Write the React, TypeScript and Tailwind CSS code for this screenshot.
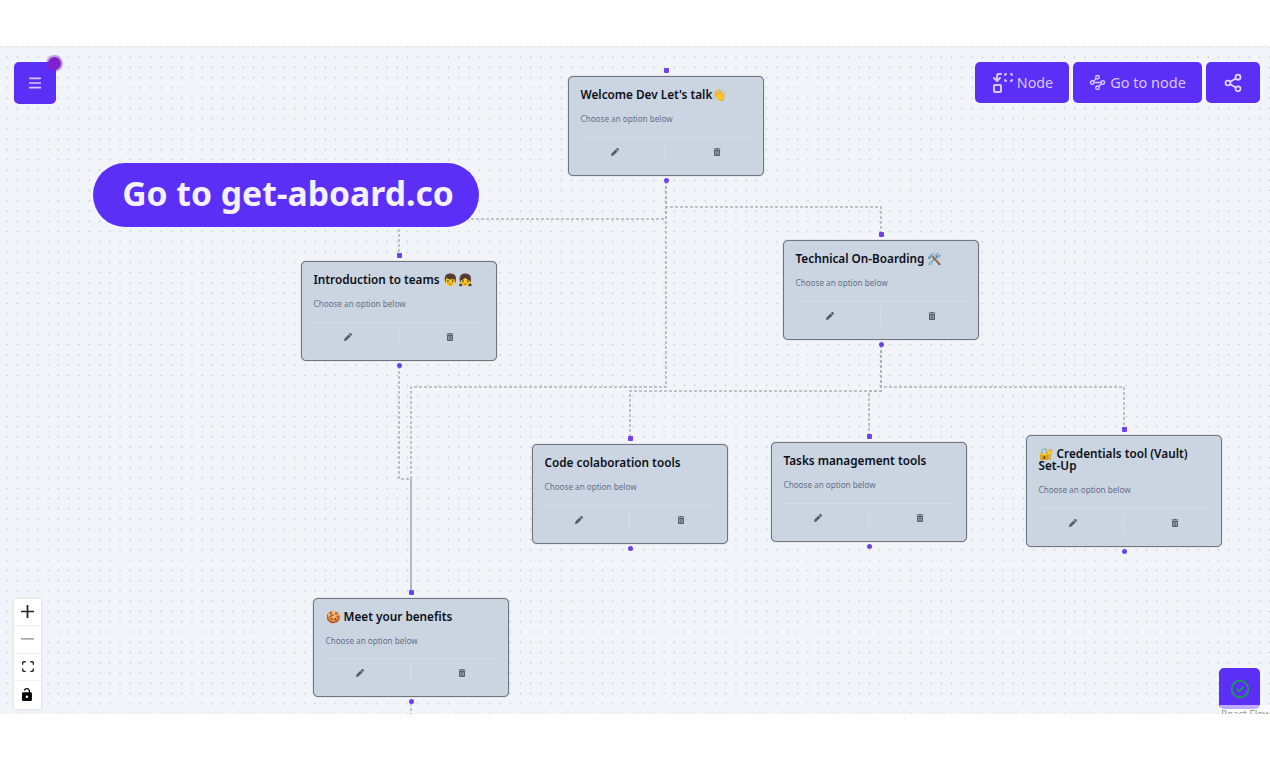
import React from "react";
import { Menu, Replace, Share2, Waypoints } from "lucide-react";
import { FaPen, FaTrashCan } from "react-icons/fa6";

interface FlowNode {
    id: string;
    title: string;
    position: string;
}

const nodes: FlowNode[] = [
    { id: "welcome", title: "Welcome Dev Let's talk👋", position: "left-[567.5px] top-[30px] h-[100px]" },
    { id: "intro", title: "Introduction to teams 👦👧", position: "left-[300.5px] top-[215px] h-[100px]" },
    { id: "tech", title: "Technical On-Boarding 🛠️", position: "left-[782.5px] top-[194px] h-[100px]" },
    { id: "code", title: "Code colaboration tools", position: "left-[531.5px] top-[398px] h-[100px]" },
    { id: "tasks", title: "Tasks management tools", position: "left-[770.5px] top-[396px] h-[100px]" },
    { id: "vault", title: "🔐 Credentials tool (Vault) Set-Up", position: "left-[1025.5px] top-[389px] h-[112px]" },
    { id: "benefits", title: "🍪 Meet your benefits", position: "left-[312.5px] top-[551.5px] h-[99.5px]" },
];

const edges: string[] = [
    "M666 181V219H399V255",
    "M666 181V207H881V234",
    "M666 181V387H411V591",
    "M399 366V479H411V591",
    "M881 345V391H630V437",
    "M881 345V391H869V436",
    "M881 345V387H1124V429",
    "M411 703V714",
];

const NodeCard = ({ title, position }: FlowNode): JSX.Element => (
    <div className={`absolute w-[196.5px] ${position}`}>
        <div className="absolute -top-[8px] left-[96px] size-[5px] rounded-[1px] bg-[#7040f0]" />
        <div className="flex h-full flex-col rounded-[5px] border border-[#6f7680] bg-[#cbd5e1] px-3 pt-[11px] shadow-[0_0_1px_#6f7680]">
            <h2 className="text-[11.75px] leading-[12px] font-semibold text-[#0b0f19]">{title}</h2>
            <p className="mt-[13px] text-[8.15px] leading-[12px] text-[#64708a]">Choose an option below</p>
            <div className="mt-auto mb-[13px] flex items-center border-t border-[#d5dde8] pt-[4px]">
                <div className="flex h-[20px] flex-1 items-center justify-center border-r border-[#d5dde8] pr-[16px]">
                    <FaPen className="size-[8px] text-[#565e6b]" />
                </div>
                <div className="flex h-[20px] flex-1 items-center justify-center pl-[16px]">
                    <FaTrashCan className="size-[8px] text-[#565e6b]" />
                </div>
            </div>
        </div>
        <div className="absolute -bottom-[7px] left-[96px] size-[5px] rounded-full bg-[#7040f0]" />
    </div>
);

const App = (): JSX.Element => {
    return (
        <div className="h-[760px] w-[1270px] overflow-hidden bg-white font-['Noto_Sans',sans-serif]">
            <div className="h-[46px]" />
            <div className="relative h-[668px] overflow-hidden bg-[#f1f5f9] bg-[radial-gradient(#c3c6cc_0.8px,transparent_1px)] bg-[size:10.27px_10.27px] bg-[position:2px_6px] shadow-[inset_0_1px_0_#e8ecf2]">
                {/* edges */}
                <svg className="absolute inset-0" width="1270" height="668" viewBox="0 46 1270 668" fill="none">
                    {edges.map((d) => (
                        <path key={d} d={d} stroke="#adb1ba" strokeWidth="1.5" strokeDasharray="3 2" />
                    ))}
                    <path d="M411 479V591" stroke="#b4b8c0" strokeWidth="2" />
                </svg>

                {nodes.map((node) => (
                    <NodeCard key={node.id} {...node} />
                ))}

                {/* banner */}
                <div className="absolute top-[117px] left-[93px] flex h-[64px] w-[386px] items-center justify-center rounded-full bg-[#5b2ff5] pb-[4px] pl-[4px] text-[33.7px] font-bold text-[#f3f0ff]">
                    Go to get-aboard.co
                </div>

                {/* menu */}
                <button className="absolute top-[16px] left-[14px] flex size-[41.5px] items-center justify-center rounded-[5px] bg-[#5b2ff5] text-[#d6c9ff]">
                    <Menu className="size-[16px]" strokeWidth={2.5} />
                    <span className="absolute -top-[5px] -right-[5px] size-[13px] rounded-full bg-[#7e22ce] shadow-[0_0_0_2px_rgba(126,34,206,0.4)]" />
                </button>

                {/* top right actions */}
                <div className="absolute top-[16px] right-[10px] flex gap-1">
                    <button className="flex h-[41px] w-[94px] items-center justify-center gap-[2px] rounded-[5px] bg-[#5b2ff5] text-[14.3px] text-[#d6c9ff]">
                        <Replace className="size-[24px]" />
                        Node
                    </button>
                    <button className="flex h-[41px] w-[129px] items-center justify-center gap-[4px] rounded-[5px] bg-[#5b2ff5] text-[14.5px] text-[#d6c9ff]">
                        <Waypoints className="size-[17px]" />
                        Go to node
                    </button>
                    <button className="flex h-[41px] w-[54px] items-center justify-center rounded-[5px] bg-[#5b2ff5] text-[#e4dcff]">
                        <Share2 className="size-[20px]" />
                    </button>
                </div>

                {/* zoom controls */}
                <div className="absolute top-[552.5px] left-[14px] flex w-[27px] flex-col bg-white shadow-[0_0_2px_1px_rgba(0,0,0,0.08)]">
                    <div className="flex h-[27.5px] items-center justify-center border-b border-[#eeeeee]">
                        <svg className="size-[13px] fill-[#222]" viewBox="0 0 32 32">
                            <path d="M32 18.133H18.133V32h-4.266V18.133H0v-4.266h13.867V0h4.266v13.867H32z" />
                        </svg>
                    </div>
                    <div className="flex h-[27.5px] items-center justify-center border-b border-[#eeeeee]">
                        <svg className="w-[13px] fill-[#aaaaaa]" viewBox="0 0 32 5">
                            <path d="M0 0h32v4.2H0z" />
                        </svg>
                    </div>
                    <div className="flex h-[27.5px] items-center justify-center border-b border-[#eeeeee]">
                        <svg className="w-[12px] fill-[#222]" viewBox="0 0 32 30">
                            <path d="M3.692 4.63c0-.53.4-.938.939-.938h5.215V0H4.708C2.13 0 0 2.054 0 4.63v5.216h3.692V4.63zM27.354 0h-5.2v3.692h5.17c.53 0 .984.4.984.939v5.215H32V4.631A4.624 4.624 0 0027.354 0zm.954 24.83c0 .532-.4.94-.939.94h-5.215v3.768h5.215c2.577 0 4.631-2.13 4.631-4.707v-5.139h-3.692v5.139zm-23.677.94c-.531 0-.939-.4-.939-.94v-5.138H0v5.139c0 2.577 2.13 4.707 4.708 4.707h5.138V25.77H4.631z" />
                        </svg>
                    </div>
                    <div className="flex h-[27.5px] items-center justify-center">
                        <svg className="h-[13px] fill-black" viewBox="0 0 25 32">
                            <path d="M21.333 10.667H19.81V7.619C19.81 3.429 16.38 0 12.19 0c-3.6 0-6.6 2.2-7.8 5.6l2.9 1.02C7.9 4.5 9.9 3.048 12.19 3.048c2.53 0 4.572 2.042 4.572 4.571v3.048H3.048A3.056 3.056 0 000 13.714v15.238A3.056 3.056 0 003.048 32h18.285a3.056 3.056 0 003.048-3.048V13.714a3.056 3.056 0 00-3.048-3.047zM12.19 24.533a3.056 3.056 0 01-3.047-3.047 3.056 3.056 0 013.047-3.048 3.056 3.056 0 013.048 3.048 3.056 3.056 0 01-3.048 3.047z" />
                        </svg>
                    </div>
                </div>

                {/* status button, the attribution strip lies over its bottom edge */}
                <button className="absolute top-[622px] left-[1219px] flex size-[41px] items-center justify-center rounded-[5px] bg-[#5b2ff5]">
                    <svg className="size-[20px] text-[#16a34a]" viewBox="0 0 24 24" fill="none" stroke="currentColor" strokeWidth="2" strokeLinecap="round" strokeLinejoin="round">
                        <circle cx="12" cy="12" r="10" />
                        <path d="m8.5 12 2.5 2.5 4.5-4.5" />
                    </svg>
                </button>
                <div className="absolute right-0 bottom-0 h-[9px] w-[50px] overflow-hidden bg-white/60 pt-[3px] text-[10px] leading-[12px] text-[#999999]">
                    <span className="block pl-[1px] whitespace-nowrap">React Flow</span>
                </div>
            </div>
        </div>
    );
};

export default App;
